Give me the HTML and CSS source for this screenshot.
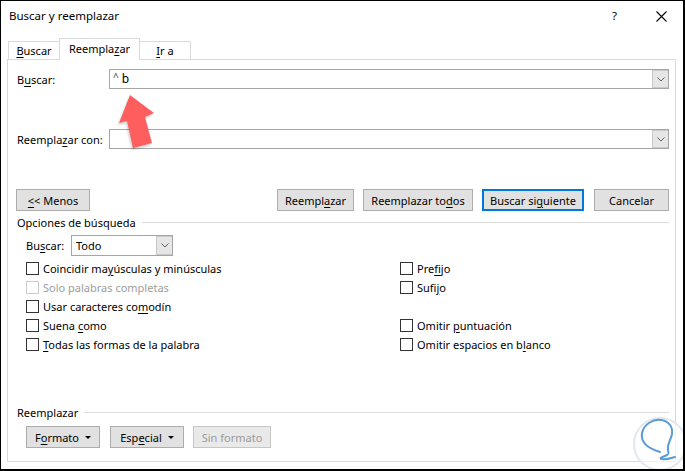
FILE: index.html
```html
<!DOCTYPE html>
<html lang="es">
<head>
<meta charset="utf-8">
<title>Buscar y reemplazar</title>
<link rel="stylesheet" href="styles.css">
</head>
<body>
<div class="window">
  <div class="titlebar">
    <span class="title">Buscar y reemplazar</span>
    <span class="help">?</span>
    <svg class="close" width="11" height="11" viewBox="0 0 11 11"><path d="M0.5 0.5 L10.5 10.5 M10.5 0.5 L0.5 10.5" stroke="#000" stroke-width="1.1" fill="none"/></svg>
  </div>
  <div class="tabs">
    <div class="tab tab-first"><u>B</u>uscar</div>
    <div class="tab tab-active">Reempla<u>z</u>ar</div>
    <div class="tab tab-last"><u>I</u>r a</div>
  </div>
  <div class="panel">
    <div class="field">
      <span class="field-label">B<u>u</u>scar:</span>
      <div class="combo">
        <span class="combo-text"><span class="caret">^</span>b</span>
        <span class="combo-btn"><svg width="8" height="5" viewBox="0 0 8 5"><path d="M0.5 0.5 L4 4 L7.5 0.5" stroke="#606060" fill="none"/></svg></span>
      </div>
    </div>
    <div class="field field-next">
      <span class="field-label">Reempla<u>z</u>ar con:</span>
      <div class="combo">
        <span class="combo-text"></span>
        <span class="combo-btn"><svg width="8" height="5" viewBox="0 0 8 5"><path d="M0.5 0.5 L4 4 L7.5 0.5" stroke="#606060" fill="none"/></svg></span>
      </div>
    </div>
    <div class="btn-row">
      <button class="btn w-menos"><u>&lt;</u>&lt; Menos</button>
      <div class="btn-group">
        <button class="btn w-reemp">Reempl<u>a</u>zar</button>
        <button class="btn w-todos">Reemplazar to<u>d</u>os</button>
        <button class="btn btn-default w-sig">Buscar si<u>g</u>uiente</button>
        <button class="btn w-cancel">Cancelar</button>
      </div>
    </div>
    <div class="section-head">
      <span>Opciones de búsqueda</span><span class="rule"></span>
    </div>
    <div class="search-in">
      <span class="search-label">Bu<u>s</u>car:</span>
      <div class="select">
        <span class="select-text">Todo</span>
        <span class="combo-btn"><svg width="8" height="5" viewBox="0 0 8 5"><path d="M0.5 0.5 L4 4 L7.5 0.5" stroke="#606060" fill="none"/></svg></span>
      </div>
    </div>
    <div class="checks">
      <label class="check"><span class="box"></span><span>Coincidir ma<u>y</u>úsculas y minúsculas</span></label>
      <label class="check"><span class="box"></span><span>Pre<u>f</u>ijo</span></label>
      <label class="check disabled"><span class="box"></span><span>Solo palabras completas</span></label>
      <label class="check"><span class="box"></span><span>Sufi<u>j</u>o</span></label>
      <label class="check"><span class="box"></span><span>Usar caracteres co<u>m</u>odín</span></label>
      <span></span>
      <label class="check"><span class="box"></span><span>Suena <u>c</u>omo</span></label>
      <label class="check"><span class="box"></span><span>Omitir <u>p</u>untuación</span></label>
      <label class="check"><span class="box"></span><span><u>T</u>odas las formas de la palabra</span></label>
      <label class="check"><span class="box"></span><span>Omitir espacios en b<u>l</u>anco</span></label>
    </div>
    <div class="section-head replace-head">
      <span>Reemplazar</span><span class="rule"></span>
    </div>
    <div class="btn-row2">
      <button class="btn w-fmt">F<u>o</u>rmato<span class="tri"></span></button>
      <button class="btn w-esp">Esp<u>e</u>cial<span class="tri"></span></button>
      <button class="btn btn-disabled w-sin">Sin formato</button>
    </div>
  </div>

  <svg class="arrow" width="50" height="64" viewBox="0 0 50 64">
    <polygon points="20,7 44,25 35,29 42,55 23,60 17,33 9,35" fill="#ff5e5e"/>
  </svg>

  <svg class="watermark" width="56" height="56" viewBox="0 0 56 56">
    <circle cx="29" cy="29" r="26" fill="rgba(255,255,255,0.6)" stroke="#e1e7ee" stroke-width="2"/>
    <path d="M29 37 C19 34 9 29 11 18 C13 9 22 4 30 5 C38 6 42 12 41 19 C40 25 36 29 37 35 C37 38 39 38 36 40 C32 42 27 43 31 44 C35 45 40 43 44 42" stroke="#5b9bd5" stroke-width="2" fill="none" stroke-linecap="round" stroke-linejoin="round"/>
  </svg>
</div>
</body>
</html>
```
FILE: styles.css
```css
html, body {
  margin: 0;
  padding: 0;
  background: #fff;
}

body {
  font-family: "Noto Sans", "Open Sans", sans-serif;
  font-size: 11px;
  color: #000;
}

u {
  text-underline-offset: 2px;
  text-decoration-thickness: 1px;
}

.window {
  position: relative;
  width: 685px;
  height: 471px;
  box-sizing: border-box;
  border: 1px solid #000;
  border-right-width: 2px;
  border-bottom-width: 2px;
  background: #fff;
  overflow: hidden;
}

/* Title bar */
.titlebar {
  height: 37px;
  box-sizing: border-box;
  padding: 7px 16px 0 8px;
  display: flex;
  align-items: flex-start;
}

.title {
  line-height: 16px;
  font-size: 11.5px;
}

.help {
  margin-left: auto;
  line-height: 16px;
  width: 7px;
  font-size: 11.5px;
}

.close {
  margin-left: 37px;
  margin-top: 3px;
}

/* Tabs */
.tabs {
  display: flex;
  align-items: flex-end;
  height: 21px;
  padding-left: 7px;
}

.tab {
  height: 18px;
  box-sizing: border-box;
  border: 1px solid #d9d9d9;
  border-bottom: 0;
  text-align: center;
  line-height: 17px;
  background: #fff;
  white-space: nowrap;
}

.tab-first {
  width: 52px;
}

.tab-active {
  width: 81px;
  height: 22px;
  margin-left: -1px;
  margin-bottom: -1px;
  line-height: 20px;
  position: relative;
  z-index: 1;
}

.tab-last {
  width: 52px;
  margin-left: -1px;
}

/* Panel */
.panel {
  margin-left: 6px;
  width: 669px;
  height: 403px;
  box-sizing: border-box;
  border: 1px solid #d9d9d9;
  padding: 9px 6px 0 9px;
}

.field {
  display: flex;
  align-items: center;
  height: 20px;
}

.field-next {
  margin-top: 40px;
}

.field-label {
  width: 92px;
  flex: none;
  white-space: nowrap;
}

.combo {
  flex: 1;
  height: 20px;
  box-sizing: border-box;
  border: 1px solid #a5a5a5;
  display: flex;
}

.combo-text {
  flex: 1;
  padding-left: 3px;
  line-height: 18px;
  font-size: 12px;
}

.caret {
  font-size: 10px;
  color: #2b4a6b;
  margin-right: 3px;
  position: relative;
  top: -2px;
}

.combo-btn {
  width: 16px;
  box-sizing: border-box;
  border: 1px solid #c9c9c9;
  border-width: 1px 0 1px 1px;
  background: #e6e6e6;
  display: flex;
  align-items: center;
  justify-content: center;
}

/* Buttons */
.btn {
  height: 22px;
  box-sizing: border-box;
  border: 1px solid #adadad;
  background: #e1e1e1;
  font: inherit;
  color: #000;
  padding: 0;
  margin: 0;
  text-align: center;
  white-space: nowrap;
}

.btn-default {
  border: 2px solid #0078d7;
}

.btn-disabled {
  color: #9a9a9a;
  border-color: #c6c6c6;
  background: #e9e9e9;
}

.btn-row {
  display: flex;
  margin-top: 40px;
  margin-left: -1px;
}

.btn-group {
  margin-left: auto;
  display: flex;
}

.w-menos { width: 74px; }
.w-reemp { width: 77px; }
.w-todos { width: 110px; margin-left: 9px; }
.w-sig { width: 102px; margin-left: 9px; }
.w-cancel { width: 75px; margin-left: 10px; }

/* Section heads */
.section-head {
  display: flex;
  align-items: center;
  height: 14px;
  margin-top: 4px;
  white-space: nowrap;
}

.rule {
  flex: 1;
  height: 1px;
  background: #dcdcdc;
  margin-left: 6px;
}

.replace-head {
  margin-top: 51px;
}

/* Search in */
.search-in {
  display: flex;
  align-items: center;
  height: 21px;
  margin-top: 6px;
  padding-left: 9px;
}

.search-label {
  width: 45px;
  flex: none;
}

.select {
  width: 102px;
  height: 21px;
  box-sizing: border-box;
  border: 1px solid #a5a5a5;
  display: flex;
}

.select-text {
  flex: 1;
  padding-left: 4px;
  line-height: 19px;
}

/* Checkboxes */
.checks {
  display: grid;
  grid-template-columns: 374px 1fr;
  grid-auto-rows: 19px;
  margin-top: 3px;
  padding-left: 9px;
}

.check {
  display: flex;
  align-items: center;
  gap: 4px;
  white-space: nowrap;
}

.box {
  width: 13px;
  height: 13px;
  box-sizing: border-box;
  border: 1px solid #333;
  background: #fff;
  flex: none;
}

.disabled {
  color: #9d9d9d;
}

.disabled .box {
  border-color: #cccccc;
}

/* Bottom buttons */
.btn-row2 {
  display: flex;
  margin-top: 7px;
  padding-left: 9px;
}

.w-fmt { width: 74px; }
.w-esp { width: 74px; margin-left: 10px; }
.w-sin { width: 78px; margin-left: 9px; }

.tri {
  display: inline-block;
  width: 0;
  height: 0;
  border-left: 3px solid transparent;
  border-right: 3px solid transparent;
  border-top: 3px solid #000;
  margin-left: 6px;
  vertical-align: middle;
  position: relative;
  top: -1px;
}

/* Overlays */
.arrow {
  position: absolute;
  left: 109px;
  top: 87px;
  filter: drop-shadow(-1px 2px 1px rgba(0, 0, 0, 0.2));
}

.watermark {
  position: absolute;
  left: 630px;
  top: 414px;
}
```
